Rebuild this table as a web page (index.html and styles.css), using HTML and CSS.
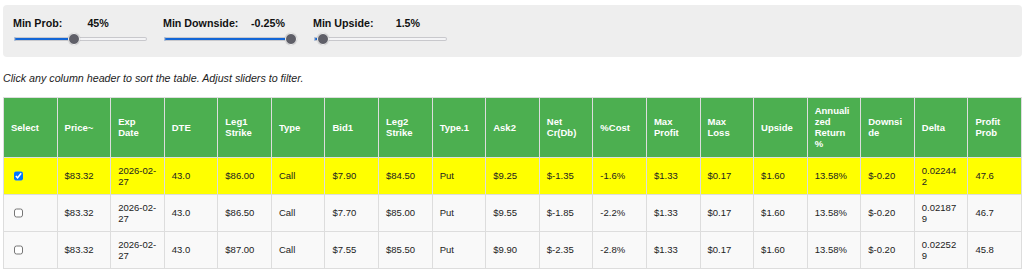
FILE: index.html
```html
<!DOCTYPE html>
<html>
<head>
<meta charset="utf-8">
<link rel="stylesheet" href="styles.css">
</head>
<body>
<div class="page">
  <div class="panel">
    <div class="group">
      <div class="lbl"><span class="name">Min Prob:</span><span class="val">45%</span></div>
      <input class="range" type="range" min="0" max="100" value="45" style="--f:0.45">
    </div>
    <div class="group">
      <div class="lbl"><span class="name">Min Downside:</span><span class="val">-0.25%</span></div>
      <input class="range" type="range" min="-5" max="-0.25" step="0.05" value="-0.25" style="--f:1">
    </div>
    <div class="group">
      <div class="lbl"><span class="name">Min Upside:</span><span class="val">1.5%</span></div>
      <input class="range" type="range" min="1.25" max="11.25" step="0.05" value="1.5" style="--f:0.025">
    </div>
  </div>
  <p class="hint">Click any column header to sort the table. Adjust sliders to filter.</p>
  <table class="grid">
    <thead>
      <tr>
        <th>Select</th><th>Price~</th><th>Exp Date</th><th>DTE</th><th>Leg1 Strike</th><th>Type</th><th>Bid1</th><th>Leg2 Strike</th><th>Type.1</th><th>Ask2</th><th>Net Cr(Db)</th><th>%Cost</th><th>Max Profit</th><th>Max Loss</th><th>Upside</th><th>Annualized Return %</th><th>Downside</th><th>Delta</th><th>Profit Prob</th>
      </tr>
    </thead>
    <tbody>
      <tr class="sel">
        <td><input class="chk" type="checkbox" checked></td><td>$83.32</td><td>2026-02-27</td><td>43.0</td><td>$86.00</td><td>Call</td><td>$7.90</td><td>$84.50</td><td>Put</td><td>$9.25</td><td>$-1.35</td><td>-1.6%</td><td>$1.33</td><td>$0.17</td><td>$1.60</td><td>13.58%</td><td>$-0.20</td><td>0.022442</td><td>47.6</td>
      </tr>
      <tr>
        <td><input class="chk" type="checkbox"></td><td>$83.32</td><td>2026-02-27</td><td>43.0</td><td>$86.50</td><td>Call</td><td>$7.70</td><td>$85.00</td><td>Put</td><td>$9.55</td><td>$-1.85</td><td>-2.2%</td><td>$1.33</td><td>$0.17</td><td>$1.60</td><td>13.58%</td><td>$-0.20</td><td>0.021879</td><td>46.7</td>
      </tr>
      <tr>
        <td><input class="chk" type="checkbox"></td><td>$83.32</td><td>2026-02-27</td><td>43.0</td><td>$87.00</td><td>Call</td><td>$7.55</td><td>$85.50</td><td>Put</td><td>$9.90</td><td>$-2.35</td><td>-2.8%</td><td>$1.33</td><td>$0.17</td><td>$1.60</td><td>13.58%</td><td>$-0.20</td><td>0.022529</td><td>45.8</td>
      </tr>
    </tbody>
  </table>
</div>
</body>
</html>
```

FILE: styles.css
```css
html, body {
  margin: 0;
  padding: 0;
  background: #ffffff;
  font-family: "Liberation Sans", Arial, sans-serif;
  color: #222222;
}

.page {
  padding: 5px 2px 0 3px;
}

.panel {
  background: #eeeeee;
  border-radius: 4px;
  padding: 12px 10px 15.6px 10px;
  display: flex;
  gap: 16px;
}

.group {
  width: 134px;
  display: flex;
  flex-direction: column;
}

.lbl {
  font-size: 10.7px;
  font-weight: bold;
  white-space: nowrap;
  color: #111111;
}

.val {
  display: inline-block;
  width: 46.5px;
  text-align: right;
}

.range {
  -webkit-appearance: none;
  appearance: none;
  width: 133px;
  height: 4px;
  margin: 8px 0 0 1px;
  padding: 0;
  border-radius: 3px;
  box-shadow: inset 0 0 0 1px #c8c8cc;
  background: linear-gradient(to right,
    #1366d6 0,
    #1366d6 calc(6px + var(--f) * (100% - 12px)),
    #f4f4f6 calc(6px + var(--f) * (100% - 12px)),
    #f4f4f6 100%);
  outline: none;
}

.range::-webkit-slider-thumb {
  -webkit-appearance: none;
  appearance: none;
  width: 12px;
  height: 12px;
  border-radius: 50%;
  background: #5f5f68;
  border: 1px solid #f6f6f6;
  box-sizing: border-box;
  box-shadow: 0 0 1px rgba(0, 0, 0, 0.35);
}

.hint {
  margin: 15px 0 13.4px 0;
  font-size: 10.7px;
  font-style: italic;
  color: #222222;
}

.grid {
  width: 100%;
  border-collapse: collapse;
  table-layout: fixed;
  border: 1px solid #dddddd;
}

.grid th,
.grid td {
  border: 1px solid #dddddd;
  text-align: left;
  vertical-align: middle;
  overflow-wrap: break-word;
  word-wrap: break-word;
}

.grid th {
  background: #4caf50;
  color: #ffffff;
  font-weight: bold;
  font-size: 9.5px;
  padding: 7.5px 7px;
}

.grid td {
  background: #f9f9f9;
  font-size: 9.5px;
  padding: 7px 7px;
  color: #222222;
}

.grid tr.sel td {
  background: #ffff00;
}

.chk {
  width: 9.5px;
  height: 9.5px;
  margin: 0 0 0 2.5px;
  vertical-align: middle;
  display: block;
}
```
